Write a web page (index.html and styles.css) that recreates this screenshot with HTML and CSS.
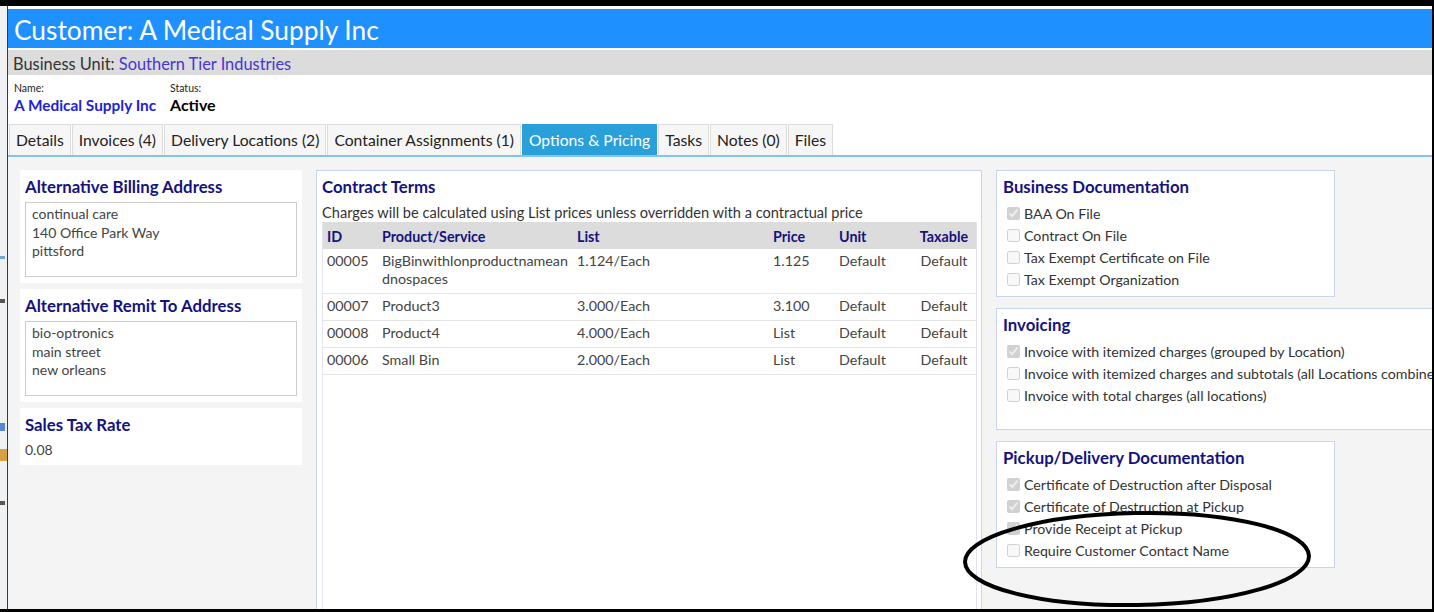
FILE: index.html
```html
<!DOCTYPE html>
<html lang="en">
<head>
    <meta charset="UTF-8">
    <title>Customer: A Medical Supply Inc</title>
    <link rel="stylesheet" href="styles.css">
</head>
<body>
    <div class="screen">
        <!-- window behind, only its edge shows -->
        <div class="behind">
            <span class="mark m-blue"></span>
            <span class="mark m-dark"></span>
            <span class="mark m-blue2"></span>
            <span class="mark m-orange"></span>
            <span class="mark m-dark"></span>
        </div>

        <div class="window">
            <div class="title-bar">Customer: A Medical Supply Inc</div>
            <div class="unit-bar">Business Unit: <a href="#">Southern Tier Industries</a></div>

            <div class="summary">
                <div class="field name-field">
                    <div class="field-label">Name:</div>
                    <a class="field-value name" href="#">A Medical Supply Inc</a>
                </div>
                <div class="field">
                    <div class="field-label">Status:</div>
                    <div class="field-value">Active</div>
                </div>
            </div>

            <div class="tabs">
                <a class="tab" href="#">Details</a>
                <a class="tab" href="#">Invoices (4)</a>
                <a class="tab" href="#">Delivery Locations (2)</a>
                <a class="tab" href="#">Container Assignments (1)</a>
                <a class="tab active" href="#">Options &amp; Pricing</a>
                <a class="tab" href="#">Tasks</a>
                <a class="tab" href="#">Notes (0)</a>
                <a class="tab" href="#">Files</a>
            </div>

            <div class="content">
                <div class="col-left">
                    <div class="card">
                        <h3>Alternative Billing Address</h3>
                        <div class="address">continual care<br>140 Office Park Way<br>pittsford</div>
                    </div>
                    <div class="card">
                        <h3>Alternative Remit To Address</h3>
                        <div class="address">bio-optronics<br>main street<br>new orleans</div>
                    </div>
                    <div class="card">
                        <h3>Sales Tax Rate</h3>
                        <div class="tax-value">0.08</div>
                    </div>
                </div>

                <div class="col-mid">
                    <div class="panel contract">
                        <h3>Contract Terms</h3>
                        <p class="note">Charges will be calculated using List prices unless overridden with a contractual price</p>
                        <div class="table-wrap">
                            <table class="terms">
                                <thead>
                                    <tr>
                                        <th class="c-id">ID</th>
                                        <th class="c-prod">Product/Service</th>
                                        <th class="c-list">List</th>
                                        <th class="c-price">Price</th>
                                        <th class="c-unit">Unit</th>
                                        <th class="c-tax">Taxable</th>
                                    </tr>
                                </thead>
                                <tbody>
                                    <tr>
                                        <td>00005</td>
                                        <td class="wrap">BigBinwithlonproductnameandnospaces</td>
                                        <td>1.124/Each</td>
                                        <td>1.125</td>
                                        <td>Default</td>
                                        <td class="c-tax">Default</td>
                                    </tr>
                                    <tr>
                                        <td>00007</td>
                                        <td>Product3</td>
                                        <td>3.000/Each</td>
                                        <td>3.100</td>
                                        <td>Default</td>
                                        <td class="c-tax">Default</td>
                                    </tr>
                                    <tr>
                                        <td>00008</td>
                                        <td>Product4</td>
                                        <td>4.000/Each</td>
                                        <td>List</td>
                                        <td>Default</td>
                                        <td class="c-tax">Default</td>
                                    </tr>
                                    <tr>
                                        <td>00006</td>
                                        <td>Small Bin</td>
                                        <td>2.000/Each</td>
                                        <td>List</td>
                                        <td>Default</td>
                                        <td class="c-tax">Default</td>
                                    </tr>
                                </tbody>
                            </table>
                        </div>
                    </div>
                </div>

                <div class="col-right">
                    <div class="panel opts">
                        <h3>Business Documentation</h3>
                        <label class="check"><input type="checkbox" checked disabled>BAA On File</label>
                        <label class="check"><input type="checkbox" disabled>Contract On File</label>
                        <label class="check"><input type="checkbox" disabled>Tax Exempt Certificate on File</label>
                        <label class="check"><input type="checkbox" disabled>Tax Exempt Organization</label>
                    </div>
                    <div class="panel opts invoicing">
                        <h3>Invoicing</h3>
                        <label class="check"><input type="checkbox" checked disabled>Invoice with itemized charges (grouped by Location)</label>
                        <label class="check"><input type="checkbox" disabled>Invoice with itemized charges and subtotals (all Locations combined)</label>
                        <label class="check"><input type="checkbox" disabled>Invoice with total charges (all locations)</label>
                    </div>
                    <div class="panel opts">
                        <h3>Pickup/Delivery Documentation</h3>
                        <label class="check"><input type="checkbox" checked disabled>Certificate of Destruction after Disposal</label>
                        <label class="check"><input type="checkbox" checked disabled>Certificate of Destruction at Pickup</label>
                        <label class="check"><input type="checkbox" checked disabled>Provide Receipt at Pickup</label>
                        <label class="check"><input type="checkbox" disabled>Require Customer Contact Name</label>
                    </div>
                </div>
            </div>
        </div>
    </div>

    <!-- hand drawn circle on top of the screenshot -->
    <svg class="scribble" width="1434" height="612" viewBox="0 0 1434 612">
        <ellipse cx="1137" cy="559" rx="172" ry="46" transform="rotate(-1 1137 559)" fill="none" stroke="#000" stroke-width="4"/>
    </svg>
</body>
</html>
```

FILE: styles.css
```css
body {
    margin: 0;
    background: #000;
    font-family: Lato, "Open Sans", sans-serif;
    color: #333;
    height: 612px;
    overflow: hidden;
    position: relative;
}

.screen {
    display: flex;
    height: 612px;
    box-sizing: border-box;
    padding: 6px 2px 3px 0;
}

.behind {
    width: 7px;
    background: #f0f1f2;
    border-right: 1px solid #3a3a3a;
    display: flex;
    flex-direction: column;
}

.mark {
    display: block;
    height: 6px;
    width: 5px;
}
.m-blue { background: #7aa3d6; margin-top: 250px; height: 3px; }
.m-dark { background: #555; margin-top: 40px; height: 4px; }
.m-blue2 { background: #5a86d8; margin-top: 120px; height: 8px; }
.m-orange { background: #d8a040; margin-top: 18px; height: 12px; width: 7px; }

.window {
    flex: 1;
    background: #fff;
    display: flex;
    flex-direction: column;
    overflow: hidden;
    min-width: 0;
}

.title-bar {
    flex-shrink: 0;
    margin-top: 3px;
    height: 39px;
    line-height: 42px;
    overflow: hidden;
    background: #1e90ff;
    color: #fff;
    font-size: 26.3px;
    padding-left: 6px;
}

.unit-bar {
    flex-shrink: 0;
    margin-top: 2px;
    height: 25px;
    line-height: 28px;
    overflow: hidden;
    background: #dcdcdc;
    padding-left: 5px;
    font-size: 16.4px;
    color: #333;
}

.unit-bar a {
    color: #4535d6;
    text-decoration: none;
}

.summary {
    flex-shrink: 0;
    height: 49px;
    display: flex;
    padding: 6px 0 0 6px;
    box-sizing: border-box;
}

.field-label {
    font-size: 10.5px;
    line-height: 14px;
    color: #222;
}

.name-field {
    width: 156px;
}

.field-value {
    display: block;
    font-weight: bold;
    font-size: 16px;
    line-height: 20px;
    color: #000;
    text-decoration: none;
}

.field-value.name {
    color: #2222d8;
    font-size: 15.4px;
}

.tabs {
    flex-shrink: 0;
    display: flex;
    height: 31px;
    padding-left: 1px;
    border-bottom: 2px solid #86c3ea;
}

.tab {
    border: 1px solid #dcdcdc;
    border-bottom: none;
    background: #f6f6f6;
    margin-right: 1px;
    padding: 0 6px;
    line-height: 31px;
    font-size: 15.7px;
    color: #222;
    text-decoration: none;
}

.tab.active {
    background: #29a0da;
    border-color: #29a0da;
    color: #fff;
}

.content {
    flex: 1;
    min-height: 0;
    background: #f4f4f4;
    display: flex;
    align-items: flex-start;
    gap: 14px;
    padding: 13px 0 0 12px;
}

h3 {
    margin: 0;
    font-size: 16.8px;
    line-height: 22px;
    font-weight: bold;
    color: #14127f;
}

.col-left {
    width: 282px;
    flex-shrink: 0;
    display: flex;
    flex-direction: column;
    gap: 6px;
}

.card {
    background: #fff;
    padding: 6px 5px;
}

.card h3 {
    margin-bottom: 4px;
}

.address {
    border: 1px solid #ccc;
    height: 75px;
    box-sizing: border-box;
    padding: 2px 6px;
    font-size: 14px;
    line-height: 18.5px;
    color: #444;
}

.tax-value {
    margin-top: 5px;
    font-size: 14px;
    line-height: 18px;
    color: #444;
}

.col-mid {
    width: 666px;
    flex-shrink: 0;
}

.panel {
    background: #fff;
    border: 1px solid #c8d6ea;
}

.contract {
    padding: 5px 4px 0 5px;
    height: 460px;
}

.note {
    margin: 6px 0 0;
    font-size: 14.6px;
    line-height: 18px;
    color: #333;
}

.table-wrap {
    border-left: 1px solid #e1e6ee;
    border-right: 1px solid #e1e6ee;
    height: 420px;
}

.terms {
    width: 100%;
    border-collapse: collapse;
    font-size: 14.3px;
    color: #444;
}

.terms th {
    background: #dcdcdc;
    color: #14127f;
    font-weight: bold;
    text-align: left;
    height: 26px;
    padding: 1px 4px 0;
}

.terms td {
    padding: 3px 4px 5px;
    line-height: 18px;
    vertical-align: top;
    border-bottom: 1px solid #e4e4e4;
}

.terms .wrap {
    word-break: break-all;
}

.c-id { width: 47px; }
.c-prod { width: 187px; }
.c-list { width: 188px; }
.c-price { width: 58px; }
.c-unit { width: 69px; }
.terms .c-tax { text-align: center; }

.col-right {
    display: flex;
    flex-direction: column;
    gap: 11px;
    flex-shrink: 0;
}

.opts {
    width: 339px;
    box-sizing: border-box;
    padding: 5px 6px 6px;
}

.opts h3 {
    margin-bottom: 4px;
}

.invoicing {
    width: 470px;
    padding-bottom: 23px;
}

.check {
    display: flex;
    align-items: center;
    height: 22px;
    font-size: 14.2px;
    color: #333;
    white-space: nowrap;
}

.check input {
    margin: 0 4px;
    width: 13px;
    height: 13px;
}

.scribble {
    position: absolute;
    left: 0;
    top: 0;
    pointer-events: none;
}
```
